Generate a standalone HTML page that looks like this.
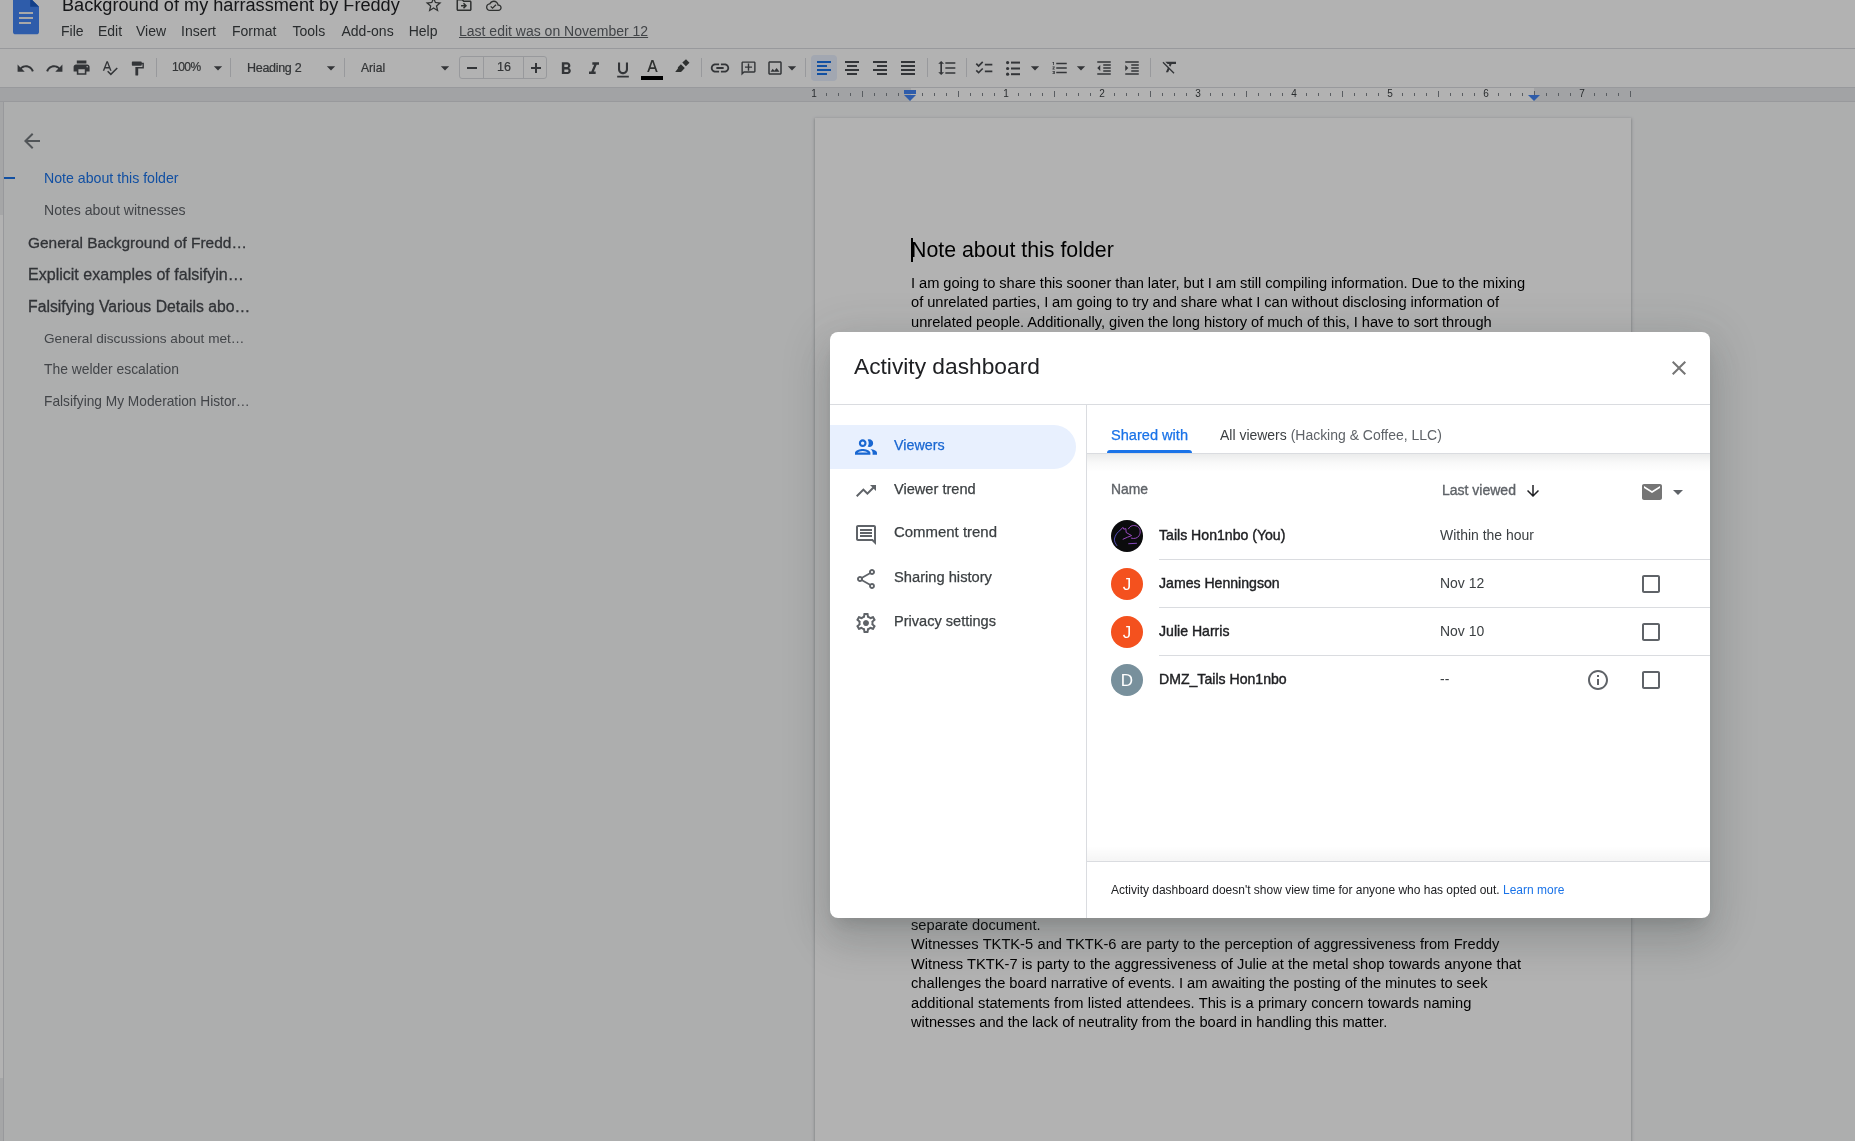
<!DOCTYPE html>
<html><head><meta charset="utf-8"><title>Activity dashboard</title>
<style>
html,body{margin:0;padding:0;width:1855px;height:1141px;overflow:hidden;background:#f8f9fa;font-family:"Liberation Sans",sans-serif;}
.t{position:absolute;white-space:nowrap;}
.i{position:absolute;display:block;}
.r{position:absolute;}
#under{will-change:transform;position:absolute;left:0;top:0;width:1855px;height:1141px;overflow:hidden;}
#scrim{position:absolute;left:0;top:0;width:1855px;height:1141px;background:rgba(0,0,0,0.3);}
#modal{will-change:transform;position:absolute;left:830px;top:332px;width:880px;height:586px;background:#fff;border-radius:8px;overflow:hidden;
 box-shadow:0 24px 38px 3px rgba(60,64,67,.15),0 9px 46px 8px rgba(60,64,67,.12),0 11px 15px -7px rgba(60,64,67,.2);}
</style></head><body>
<div id="under">

<div class="r" style="left:0px;top:0px;width:1855px;height:48px;background:#ffffff;"></div>
<div class="r" style="left:0px;top:48px;width:1855px;height:1px;background:#dadce0;"></div>
<div class="r" style="left:0px;top:49px;width:1855px;height:38px;background:#ffffff;"></div>
<div class="r" style="left:0px;top:87px;width:1855px;height:1px;background:#dadce0;"></div>
<svg class="i" style="left:13px;top:-2px" width="26" height="37" viewBox="0 0 26 37"><path fill="#4285f4" d="M0 2.5C0 1.1 1.1 0 2.5 0H17.2L26 8.8V34C26 35.4 24.9 36.3 23.5 36.3H2.5C1.1 36.3 0 35.4 0 34z"/><path fill="#1a5bc4" d="M17.2 0L26 8.8H17.2z"/><rect fill="#f1f1f1" x="6" y="14" width="14" height="2"/><rect fill="#f1f1f1" x="6" y="19" width="14" height="2"/><rect fill="#f1f1f1" x="6" y="24" width="12" height="2"/></svg>
<div class="t" style="left:62px;top:-4.36px;font-size:18.15px;line-height:18.15px;color:#202124;font-weight:400;">Background of my harrassment by Freddy</div>
<svg class="i" style="left:424.4px;top:-4.9px;" width="19.2" height="19.2" viewBox="0 0 24 24"><path fill="#444746" d="M22 9.24l-7.19-.62L12 2 9.19 8.63 2 9.24l5.46 4.73L5.82 21 12 17.27 18.18 21l-1.63-7.03L22 9.24zM12 15.4l-3.76 2.27 1-4.28-3.32-2.88 4.38-.38L12 6.1l1.71 4.04 4.38.38-3.32 2.88 1 4.28L12 15.4z"/></svg>
<svg class="i" style="left:454.7px;top:-4.3px;" width="18.1" height="18.1" viewBox="0 0 24 24"><path fill="#444746" d="M20 6h-8l-2-2H4c-1.1 0-1.99.9-1.99 2L2 18c0 1.1.9 2 2 2h16c1.1 0 2-.9 2-2V8c0-1.1-.9-2-2-2zm0 12H4V6h5.17l2 2H20v10zm-7.84-6H8v2h4.16l-1.59 1.59L11.99 17 16 13.01 11.99 9l-1.41 1.41L12.16 12z"/></svg>
<svg class="i" style="left:486.2px;top:-2.3px;" width="15.7" height="15.7" viewBox="0 0 24 24"><path fill="#444746" d="M19.35 10.04C18.67 6.59 15.64 4 12 4 9.11 4 6.6 5.64 5.35 8.04 2.34 8.36 0 10.91 0 14c0 3.31 2.69 6 6 6h13c2.76 0 5-2.24 5-5 0-2.64-2.05-4.78-4.65-4.96zM19 18H6c-2.21 0-4-1.79-4-4 0-2.05 1.53-3.76 3.56-3.97l1.07-.11.5-.95C8.080 7.14 9.94 6 12 6c2.62 0 4.88 1.86 5.39 4.43l.3 1.5 1.53.11c1.56.1 2.78 1.41 2.78 2.96 0 1.65-1.35 3-3 3zm-9-3.82l-2.09-2.09L6.5 13.5 10 17l6.01-6.01-1.41-1.41z"/></svg>
<div class="t" style="left:61px;top:24.15px;font-size:14px;line-height:14px;color:#3c4043;font-weight:400;">File</div>
<div class="t" style="left:98px;top:24.15px;font-size:14px;line-height:14px;color:#3c4043;font-weight:400;">Edit</div>
<div class="t" style="left:136px;top:24.15px;font-size:14px;line-height:14px;color:#3c4043;font-weight:400;">View</div>
<div class="t" style="left:181px;top:24.15px;font-size:14px;line-height:14px;color:#3c4043;font-weight:400;">Insert</div>
<div class="t" style="left:232px;top:24.15px;font-size:14px;line-height:14px;color:#3c4043;font-weight:400;">Format</div>
<div class="t" style="left:292.5px;top:24.15px;font-size:14px;line-height:14px;color:#3c4043;font-weight:400;">Tools</div>
<div class="t" style="left:341.5px;top:24.15px;font-size:14px;line-height:14px;color:#3c4043;font-weight:400;">Add-ons</div>
<div class="t" style="left:408.7px;top:24.15px;font-size:14px;line-height:14px;color:#3c4043;font-weight:400;">Help</div>
<div class="t" style="left:459px;top:24.15px;font-size:14px;line-height:14px;color:#5f6368;font-weight:400;text-decoration:underline;">Last edit was on November 12</div>
<svg class="i" style="left:16.4px;top:58.5px;" width="19" height="19" viewBox="0 0 24 24"><path fill="#4a4d51" d="M12.5 8c-2.65 0-5.05.99-6.9 2.6L2 7v9h9l-3.62-3.62c1.39-1.16 3.16-1.88 5.12-1.88 3.54 0 6.55 2.31 7.6 5.5l2.37-.78C21.08 11.03 17.15 8 12.5 8z"/></svg>
<svg class="i" style="left:44.8px;top:58.5px;" width="19" height="19" viewBox="0 0 24 24"><path fill="#4a4d51" d="M18.4 10.6C16.55 8.99 14.15 8 11.5 8c-4.65 0-8.58 3.03-9.960 7.22L3.9 16c1.05-3.19 4.05-5.5 7.6-5.5 1.95 0 3.73.72 5.12 1.88L13 16h9V7l-3.6 3.6z"/></svg>
<svg class="i" style="left:72.4px;top:57.6px;" width="19.2" height="19.2" viewBox="0 0 24 24"><path fill="#4a4d51" d="M19 8H5c-1.66 0-3 1.34-3 3v6h4v4h12v-4h4v-6c0-1.66-1.34-3-3-3zm-3 11H8v-5h8v5zm3-7c-.55 0-1-.45-1-1s.45-1 1-1 1 .45 1 1-.45 1-1 1zm-1-9H6v4h12V3z"/></svg>
<svg class="i" style="left:101.2px;top:58.8px;" width="17.5" height="17.5" viewBox="0 0 24 24"><path fill="#4a4d51" d="M12.45 16h2.09L9.43 3H7.57L2.46 16h2.09l1.12-3h5.64l1.14 3zm-6.02-5L8.5 5.48 10.57 11H6.43zm15.16.59l-8.09 8.09L9.83 16l-1.41 1.41 5.09 5.09L23 13l-1.41-1.41z"/></svg>
<svg class="i" style="left:129.2px;top:59.6px;" width="17" height="17" viewBox="0 0 24 24"><path fill="#4a4d51" d="M18 4V3c0-.55-.45-1-1-1H5c-.55 0-1 .45-1 1v4c0 .55.45 1 1 1h12c.55 0 1-.45 1-1V6h1v4H9v11c0 .55.45 1 1 1h2c.55 0 1-.45 1-1v-9h8V4h-3z"/></svg>
<div class="r" style="left:156px;top:58px;width:1px;height:19px;background:#dadce0;"></div>
<div class="r" style="left:230px;top:58px;width:1px;height:19px;background:#dadce0;"></div>
<div class="r" style="left:344px;top:58px;width:1px;height:19px;background:#dadce0;"></div>
<div class="r" style="left:701px;top:58px;width:1px;height:19px;background:#dadce0;"></div>
<div class="r" style="left:805px;top:58px;width:1px;height:19px;background:#dadce0;"></div>
<div class="r" style="left:927px;top:58px;width:1px;height:19px;background:#dadce0;"></div>
<div class="r" style="left:966px;top:58px;width:1px;height:19px;background:#dadce0;"></div>
<div class="r" style="left:1150px;top:58px;width:1px;height:19px;background:#dadce0;"></div>
<div class="t" style="left:172px;top:61.24px;font-size:12px;line-height:12px;color:#4a4d51;font-weight:400;letter-spacing:-0.5px;-webkit-text-stroke:0.2px #444746;">100%</div>
<svg class="i" style="left:208.2px;top:57.9px;" width="20" height="20" viewBox="0 0 24 24"><path fill="#4a4d51" d="M7 10l5 5 5-5z"/></svg>
<div class="t" style="left:247px;top:61.92px;font-size:12.5px;line-height:12.5px;color:#4a4d51;font-weight:400;letter-spacing:-0.3px;-webkit-text-stroke:0.2px #444746;">Heading 2</div>
<svg class="i" style="left:321.2px;top:57.9px;" width="20" height="20" viewBox="0 0 24 24"><path fill="#4a4d51" d="M7 10l5 5 5-5z"/></svg>
<div class="t" style="left:361px;top:61.76px;font-size:12.1px;line-height:12.1px;color:#4a4d51;font-weight:400;-webkit-text-stroke:0.2px #444746;">Arial</div>
<svg class="i" style="left:435.2px;top:58.4px;" width="20" height="20" viewBox="0 0 24 24"><path fill="#4a4d51" d="M7 10l5 5 5-5z"/></svg>
<div class="r" style="left:459px;top:56px;width:86px;height:21px;border:1px solid #dadce0;border-radius:3px;"></div>
<div class="r" style="left:483px;top:56px;width:1px;height:23px;background:#dadce0;"></div>
<div class="r" style="left:523px;top:56px;width:1px;height:23px;background:#dadce0;"></div>
<div class="r" style="left:467px;top:67px;width:10px;height:2px;background:#4a4d51;"></div>
<div class="t" style="left:504px;top:61.42px;font-size:12.5px;line-height:12.5px;color:#4a4d51;font-weight:400;transform:translateX(-50%);-webkit-text-stroke:0.2px #444746;">16</div>
<div class="r" style="left:531px;top:67px;width:10px;height:2px;background:#4a4d51;"></div>
<div class="r" style="left:535px;top:63px;width:2px;height:10px;background:#4a4d51;"></div>
<svg class="i" style="left:555.8px;top:59px;" width="20" height="20" viewBox="0 0 24 24"><path fill="#4a4d51" d="M15.6 10.79c.97-.67 1.65-1.77 1.65-2.79 0-2.26-1.75-4-4-4H7v14h7.04c2.090 0 3.71-1.7 3.71-3.79 0-1.52-.86-2.82-2.15-3.42zM10 6.5h3c.83 0 1.5.67 1.5 1.5s-.67 1.5-1.5 1.5h-3v-3zm3.5 9H10v-3h3.5c.83 0 1.5.67 1.5 1.5s-.67 1.5-1.5 1.5z"/></svg>
<svg class="i" style="left:584px;top:58.7px;" width="20" height="20" viewBox="0 0 24 24"><path fill="#4a4d51" d="M10 4v3h2.21l-3.42 8H6v3h8v-3h-2.21l3.42-8H18V4z"/></svg>
<svg class="i" style="left:612.8px;top:59.5px;" width="20" height="20" viewBox="0 0 24 24"><path fill="#4a4d51" d="M12 17c3.31 0 6-2.69 6-6V3h-2.5v8c0 1.93-1.57 3.5-3.5 3.5S8.5 12.93 8.5 11V3H6v8c0 3.31 2.69 6 6 6zm-7 2v2h14v-2H5z"/></svg>
<svg class="i" style="left:646.5px;top:60px" width="11" height="12" viewBox="0 0 11 12"><path fill="#444746" fill-rule="evenodd" d="M4.4 0H6.4L10.7 12H8.9L7.8 8.9H3.1L2 12H0.2zM3.65 7.3H7.25L5.45 2.1z"/></svg>
<div class="r" style="left:641px;top:76px;width:22px;height:4px;background:#000000;"></div>
<svg class="i" style="left:674px;top:58px" width="18" height="16" viewBox="0 0 18 16"><path fill="#444746" d="M12 1.2L15.5 4.7L11.9 8.2L8.3 4.5zM6.9 6.3L10.8 10L7.6 13.5L6.6 14.1H1.2L3.9 10.6V9.3z"/></svg>
<svg class="i" style="left:709.2px;top:57px;" width="22" height="22" viewBox="0 0 24 24"><path fill="#4a4d51" d="M3.9 12c0-1.71 1.39-3.1 3.1-3.1h4V7H7c-2.76 0-5 2.24-5 5s2.24 5 5 5h4v-1.9H7c-1.71 0-3.1-1.39-3.1-3.1zM8 13h8v-2H8v2zm9-6h-4v1.9h4c1.71 0 3.1 1.39 3.1 3.1s-1.39 3.1-3.1 3.1h-4V17h4c2.76 0 5-2.24 5-5s-2.24-5-5-5z"/></svg>
<svg class="i" style="left:739.6px;top:59.6px;" width="17" height="17" viewBox="0 0 24 24"><path fill="#4a4d51" d="M20 2H4c-1.1 0-2 .9-2 2v18l4-4h14c1.1 0 2-.9 2-2V4c0-1.1-.9-2-2-2zm0 14H5.17L4 17.17V4h16v12zM11 5h2v4h4v2h-4v4h-2v-4H7V9h4z"/></svg>
<svg class="i" style="left:765.75px;top:58.75px;" width="18" height="18" viewBox="0 0 24 24"><path fill="#4a4d51" d="M19 3H5c-1.1 0-2 .9-2 2v14c0 1.1.9 2 2 2h14c1.1 0 2-.9 2-2V5c0-1.1-.9-2-2-2zm0 16H5V5h14v14zm-4.86-7.14l-3 3.86L9 13.14 6 17h12l-3.86-5.14z"/></svg>
<svg class="i" style="left:782.2px;top:58.4px;" width="20" height="20" viewBox="0 0 24 24"><path fill="#4a4d51" d="M7 10l5 5 5-5z"/></svg>
<div class="r" style="left:811px;top:55px;width:26px;height:26px;background:#e8f0fe;border-radius:4px;"></div>
<div class="r" style="left:817px;top:61px;width:14px;height:2px;background:#1a73e8;"></div>
<div class="r" style="left:817px;top:65px;width:10px;height:2px;background:#1a73e8;"></div>
<div class="r" style="left:817px;top:69px;width:14px;height:2px;background:#1a73e8;"></div>
<div class="r" style="left:817px;top:73px;width:10px;height:2px;background:#1a73e8;"></div>
<div class="r" style="left:845px;top:61px;width:14px;height:2px;background:#4a4d51;"></div>
<div class="r" style="left:847px;top:65px;width:10px;height:2px;background:#4a4d51;"></div>
<div class="r" style="left:845px;top:69px;width:14px;height:2px;background:#4a4d51;"></div>
<div class="r" style="left:847px;top:73px;width:10px;height:2px;background:#4a4d51;"></div>
<div class="r" style="left:873px;top:61px;width:14px;height:2px;background:#4a4d51;"></div>
<div class="r" style="left:877px;top:65px;width:10px;height:2px;background:#4a4d51;"></div>
<div class="r" style="left:873px;top:69px;width:14px;height:2px;background:#4a4d51;"></div>
<div class="r" style="left:877px;top:73px;width:10px;height:2px;background:#4a4d51;"></div>
<div class="r" style="left:901px;top:61px;width:14px;height:2px;background:#4a4d51;"></div>
<div class="r" style="left:901px;top:65px;width:14px;height:2px;background:#4a4d51;"></div>
<div class="r" style="left:901px;top:69px;width:14px;height:2px;background:#4a4d51;"></div>
<div class="r" style="left:901px;top:73px;width:14px;height:2px;background:#4a4d51;"></div>
<svg class="i" style="left:936.75px;top:58px;" width="20" height="20" viewBox="0 0 24 24"><path fill="#4a4d51" d="M6 7h2.5L5 3.5 1.5 7H4v10H1.5L5 20.5 8.5 17H6V7zm4-2v2h12V5H10zm0 14h12v-2H10v2zm0-6h12v-2H10v2z"/></svg>
<svg class="i" style="left:974.3px;top:58px;" width="20" height="20" viewBox="0 0 24 24"><path fill="#4a4d51" d="M22 7h-9v2h9V7zm0 8h-9v2h9v-2zM5.54 11L2 7.46l1.41-1.41 2.12 2.12 4.24-4.24 1.41 1.41L5.54 11zm0 8L2 15.46l1.41-1.41 2.12 2.12 4.24-4.24 1.41 1.41L5.54 19z"/></svg>
<svg class="i" style="left:1006px;top:60.5px" width="14" height="15" viewBox="0 0 14 15"><g fill="#4a4d51"><circle cx="1.6" cy="1.6" r="1.6"/><circle cx="1.6" cy="7.5" r="1.6"/><circle cx="1.6" cy="13.2" r="1.6"/><rect x="5" y="0.6" width="9" height="2"/><rect x="5" y="6.5" width="9" height="2"/><rect x="5" y="12.2" width="9" height="2"/></g></svg>
<svg class="i" style="left:1025.2px;top:58.4px;" width="20" height="20" viewBox="0 0 24 24"><path fill="#4a4d51" d="M7 10l5 5 5-5z"/></svg>
<svg class="i" style="left:1050.5px;top:59px;" width="18" height="18" viewBox="0 0 24 24"><path fill="#4a4d51" d="M2 17h2v.5H3v1h1v.5H2v1h3v-4H2v1zm1-9h1V4H2v1h1v3zm-1 3h1.8L2 13.1v.9h3v-1H3.2L5 10.9V10H2v1zm5-6v2h14V5H7zm0 14h14v-2H7v2zm0-6h14v-2H7v2z"/></svg>
<svg class="i" style="left:1071.2px;top:58.4px;" width="20" height="20" viewBox="0 0 24 24"><path fill="#4a4d51" d="M7 10l5 5 5-5z"/></svg>
<svg class="i" style="left:1094.75px;top:59px;" width="18" height="18" viewBox="0 0 24 24"><path fill="#4a4d51" d="M11 17h10v-2H11v2zm-8-5l4 4V8l-4 4zm0 9h18v-2H3v2zM3 3v2h18V3H3zm8 6h10V7H11v2zm0 4h10v-2H11v2z"/></svg>
<svg class="i" style="left:1122.75px;top:59px;" width="18" height="18" viewBox="0 0 24 24"><path fill="#4a4d51" d="M3 21h18v-2H3v2zM3 8v8l4-4-4-4zm8 9h10v-2H11v2zM3 3v2h18V3H3zm8 6h10V7H11v2zm0 4h10v-2H11v2z"/></svg>
<svg class="i" style="left:1160.5px;top:58.25px;" width="18" height="18" viewBox="0 0 24 24"><path fill="#4a4d51" d="M3.27 5L2 6.27l6.97 6.97L6.5 19h3l1.57-3.66L16.73 21 18 19.73 3.550 5.27 3.27 5zM6 5v.18L8.82 8h2.4l-.72 1.68 2.1 2.1L14.21 8H20V5H6z"/></svg>
<div class="r" style="left:0px;top:88px;width:1855px;height:13px;background:#e8eaed;"></div>
<div class="r" style="left:911px;top:88px;width:623px;height:13px;background:#ffffff;"></div>
<div class="r" style="left:0px;top:101px;width:1855px;height:1px;background:#dadce0;"></div>
<div class="t" style="left:814px;top:89.03px;font-size:10px;line-height:10px;color:#3c4043;font-weight:400;transform:translateX(-50%);">1</div>
<div class="r" style="left:826px;top:93px;width:1px;height:3px;background:#80868b;"></div>
<div class="r" style="left:838px;top:93px;width:1px;height:3px;background:#80868b;"></div>
<div class="r" style="left:850px;top:93px;width:1px;height:3px;background:#80868b;"></div>
<div class="r" style="left:862px;top:91px;width:1px;height:6px;background:#80868b;"></div>
<div class="r" style="left:874px;top:93px;width:1px;height:3px;background:#80868b;"></div>
<div class="r" style="left:886px;top:93px;width:1px;height:3px;background:#80868b;"></div>
<div class="r" style="left:898px;top:93px;width:1px;height:3px;background:#80868b;"></div>
<div class="r" style="left:922px;top:93px;width:1px;height:3px;background:#80868b;"></div>
<div class="r" style="left:934px;top:93px;width:1px;height:3px;background:#80868b;"></div>
<div class="r" style="left:946px;top:93px;width:1px;height:3px;background:#80868b;"></div>
<div class="r" style="left:958px;top:91px;width:1px;height:6px;background:#80868b;"></div>
<div class="r" style="left:970px;top:93px;width:1px;height:3px;background:#80868b;"></div>
<div class="r" style="left:982px;top:93px;width:1px;height:3px;background:#80868b;"></div>
<div class="r" style="left:994px;top:93px;width:1px;height:3px;background:#80868b;"></div>
<div class="t" style="left:1006px;top:89.03px;font-size:10px;line-height:10px;color:#3c4043;font-weight:400;transform:translateX(-50%);">1</div>
<div class="r" style="left:1018px;top:93px;width:1px;height:3px;background:#80868b;"></div>
<div class="r" style="left:1030px;top:93px;width:1px;height:3px;background:#80868b;"></div>
<div class="r" style="left:1042px;top:93px;width:1px;height:3px;background:#80868b;"></div>
<div class="r" style="left:1054px;top:91px;width:1px;height:6px;background:#80868b;"></div>
<div class="r" style="left:1066px;top:93px;width:1px;height:3px;background:#80868b;"></div>
<div class="r" style="left:1078px;top:93px;width:1px;height:3px;background:#80868b;"></div>
<div class="r" style="left:1090px;top:93px;width:1px;height:3px;background:#80868b;"></div>
<div class="t" style="left:1102px;top:89.03px;font-size:10px;line-height:10px;color:#3c4043;font-weight:400;transform:translateX(-50%);">2</div>
<div class="r" style="left:1114px;top:93px;width:1px;height:3px;background:#80868b;"></div>
<div class="r" style="left:1126px;top:93px;width:1px;height:3px;background:#80868b;"></div>
<div class="r" style="left:1138px;top:93px;width:1px;height:3px;background:#80868b;"></div>
<div class="r" style="left:1150px;top:91px;width:1px;height:6px;background:#80868b;"></div>
<div class="r" style="left:1162px;top:93px;width:1px;height:3px;background:#80868b;"></div>
<div class="r" style="left:1174px;top:93px;width:1px;height:3px;background:#80868b;"></div>
<div class="r" style="left:1186px;top:93px;width:1px;height:3px;background:#80868b;"></div>
<div class="t" style="left:1198px;top:89.03px;font-size:10px;line-height:10px;color:#3c4043;font-weight:400;transform:translateX(-50%);">3</div>
<div class="r" style="left:1210px;top:93px;width:1px;height:3px;background:#80868b;"></div>
<div class="r" style="left:1222px;top:93px;width:1px;height:3px;background:#80868b;"></div>
<div class="r" style="left:1234px;top:93px;width:1px;height:3px;background:#80868b;"></div>
<div class="r" style="left:1246px;top:91px;width:1px;height:6px;background:#80868b;"></div>
<div class="r" style="left:1258px;top:93px;width:1px;height:3px;background:#80868b;"></div>
<div class="r" style="left:1270px;top:93px;width:1px;height:3px;background:#80868b;"></div>
<div class="r" style="left:1282px;top:93px;width:1px;height:3px;background:#80868b;"></div>
<div class="t" style="left:1294px;top:89.03px;font-size:10px;line-height:10px;color:#3c4043;font-weight:400;transform:translateX(-50%);">4</div>
<div class="r" style="left:1306px;top:93px;width:1px;height:3px;background:#80868b;"></div>
<div class="r" style="left:1318px;top:93px;width:1px;height:3px;background:#80868b;"></div>
<div class="r" style="left:1330px;top:93px;width:1px;height:3px;background:#80868b;"></div>
<div class="r" style="left:1342px;top:91px;width:1px;height:6px;background:#80868b;"></div>
<div class="r" style="left:1354px;top:93px;width:1px;height:3px;background:#80868b;"></div>
<div class="r" style="left:1366px;top:93px;width:1px;height:3px;background:#80868b;"></div>
<div class="r" style="left:1378px;top:93px;width:1px;height:3px;background:#80868b;"></div>
<div class="t" style="left:1390px;top:89.03px;font-size:10px;line-height:10px;color:#3c4043;font-weight:400;transform:translateX(-50%);">5</div>
<div class="r" style="left:1402px;top:93px;width:1px;height:3px;background:#80868b;"></div>
<div class="r" style="left:1414px;top:93px;width:1px;height:3px;background:#80868b;"></div>
<div class="r" style="left:1426px;top:93px;width:1px;height:3px;background:#80868b;"></div>
<div class="r" style="left:1438px;top:91px;width:1px;height:6px;background:#80868b;"></div>
<div class="r" style="left:1450px;top:93px;width:1px;height:3px;background:#80868b;"></div>
<div class="r" style="left:1462px;top:93px;width:1px;height:3px;background:#80868b;"></div>
<div class="r" style="left:1474px;top:93px;width:1px;height:3px;background:#80868b;"></div>
<div class="t" style="left:1486px;top:89.03px;font-size:10px;line-height:10px;color:#3c4043;font-weight:400;transform:translateX(-50%);">6</div>
<div class="r" style="left:1498px;top:93px;width:1px;height:3px;background:#80868b;"></div>
<div class="r" style="left:1510px;top:93px;width:1px;height:3px;background:#80868b;"></div>
<div class="r" style="left:1522px;top:93px;width:1px;height:3px;background:#80868b;"></div>
<div class="r" style="left:1534px;top:91px;width:1px;height:6px;background:#80868b;"></div>
<div class="r" style="left:1546px;top:93px;width:1px;height:3px;background:#80868b;"></div>
<div class="r" style="left:1558px;top:93px;width:1px;height:3px;background:#80868b;"></div>
<div class="r" style="left:1570px;top:93px;width:1px;height:3px;background:#80868b;"></div>
<div class="t" style="left:1582px;top:89.03px;font-size:10px;line-height:10px;color:#3c4043;font-weight:400;transform:translateX(-50%);">7</div>
<div class="r" style="left:1594px;top:93px;width:1px;height:3px;background:#80868b;"></div>
<div class="r" style="left:1606px;top:93px;width:1px;height:3px;background:#80868b;"></div>
<div class="r" style="left:1618px;top:93px;width:1px;height:3px;background:#80868b;"></div>
<div class="r" style="left:1630px;top:91px;width:1px;height:6px;background:#80868b;"></div>
<div class="r" style="left:904px;top:90px;width:12px;height:4px;background:#4285f4;"></div>
<svg class="i" style="left:904px;top:95px" width="12" height="6" viewBox="0 0 12 6"><path fill="#4285f4" d="M0 0H12L6 6z"/></svg>
<svg class="i" style="left:1528px;top:95px" width="12" height="6" viewBox="0 0 12 6"><path fill="#4285f4" d="M0 0H12L6 6z"/></svg>
<div class="r" style="left:0px;top:102px;width:3px;height:113px;background:#eceef0;"></div>
<div class="r" style="left:0px;top:215px;width:3px;height:863px;background:#ffffff;"></div>
<div class="r" style="left:0px;top:1078px;width:3px;height:63px;background:#eceef0;"></div>
<div class="r" style="left:3px;top:102px;width:1px;height:1039px;background:#dadce0;"></div>
<svg class="i" style="left:20px;top:129px;" width="24" height="24" viewBox="0 0 24 24"><path fill="#757a7f" d="M20 11H7.83l5.59-5.59L12 4l-8 8 8 8 1.41-1.41L7.83 13H20v-2z"/></svg>
<div class="r" style="left:4px;top:177px;width:11px;height:2px;background:#1a73e8;"></div>
<div class="t" style="left:44px;top:171.01px;font-size:14.17px;line-height:14.17px;color:#1a73e8;font-weight:400;">Note about this folder</div>
<div class="t" style="left:44px;top:203.08px;font-size:14.08px;line-height:14.08px;color:#5f6368;font-weight:400;">Notes about witnesses</div>
<div class="t" style="left:28px;top:234.92px;font-size:15.45px;line-height:15.45px;color:#474a4f;font-weight:400;-webkit-text-stroke:0.3px #474a4f;">General Background of Fredd…</div>
<div class="t" style="left:28px;top:266.41px;font-size:16.06px;line-height:16.06px;color:#474a4f;font-weight:400;-webkit-text-stroke:0.3px #474a4f;">Explicit examples of falsifyin…</div>
<div class="t" style="left:28px;top:298.64px;font-size:15.78px;line-height:15.78px;color:#474a4f;font-weight:400;-webkit-text-stroke:0.3px #474a4f;">Falsifying Various Details abo…</div>
<div class="t" style="left:44px;top:331.97px;font-size:13.62px;line-height:13.62px;color:#5f6368;font-weight:400;">General discussions about met…</div>
<div class="t" style="left:44px;top:363.25px;font-size:13.88px;line-height:13.88px;color:#5f6368;font-weight:400;">The welder escalation</div>
<div class="t" style="left:44px;top:395.38px;font-size:13.73px;line-height:13.73px;color:#5f6368;font-weight:400;">Falsifying My Moderation Histor…</div>
<div class="r" style="left:815px;top:118px;width:816px;height:1100px;background:#fff;box-shadow:0 1px 2px 0 rgba(60,64,67,.3),0 1px 3px 1px rgba(60,64,67,.15);"></div>
<div class="r" style="left:911px;top:238px;width:2px;height:24px;background:#000;"></div>
<div class="t" style="left:911px;top:240.44px;font-size:21.33px;line-height:21.33px;color:#000;font-weight:400;">Note about this folder</div>
<div class="t" style="left:911px;top:275.58px;font-size:14.67px;line-height:14.67px;color:#000;font-weight:400;word-spacing:-0.14px;">I am going to share this sooner than later, but I am still compiling information. Due to the mixing</div>
<div class="t" style="left:911px;top:295.08px;font-size:14.67px;line-height:14.67px;color:#000;font-weight:400;word-spacing:-0.16px;">of unrelated parties, I am going to try and share what I can without disclosing information of</div>
<div class="t" style="left:911px;top:314.58px;font-size:14.67px;line-height:14.67px;color:#000;font-weight:400;word-spacing:-0.16px;">unrelated people. Additionally, given the long history of much of this, I have to sort through</div>
<div class="t" style="left:911px;top:334.08px;font-size:14.67px;line-height:14.67px;color:#000;font-weight:400;word-spacing:0px;">a lot of material before I can share everything in a reasonable and organized manner.</div>
<div class="t" style="left:911px;top:917.78px;font-size:14.67px;line-height:14.67px;color:#000;font-weight:400;word-spacing:0px;">separate document.</div>
<div class="t" style="left:911px;top:937.08px;font-size:14.67px;line-height:14.67px;color:#000;font-weight:400;word-spacing:0.26px;">Witnesses TKTK-5 and TKTK-6 are party to the perception of aggressiveness from Freddy</div>
<div class="t" style="left:911px;top:956.88px;font-size:14.67px;line-height:14.67px;color:#000;font-weight:400;word-spacing:0.17px;">Witness TKTK-7 is party to the aggressiveness of Julie at the metal shop towards anyone that</div>
<div class="t" style="left:911px;top:976.08px;font-size:14.67px;line-height:14.67px;color:#000;font-weight:400;word-spacing:-0.13px;">challenges the board narrative of events. I am awaiting the posting of the minutes to seek</div>
<div class="t" style="left:911px;top:995.78px;font-size:14.67px;line-height:14.67px;color:#000;font-weight:400;word-spacing:0.24px;">additional statements from listed attendees. This is a primary concern towards naming</div>
<div class="t" style="left:911px;top:1014.98px;font-size:14.67px;line-height:14.67px;color:#000;font-weight:400;word-spacing:-0.1px;">witnesses and the lack of neutrality from the board in handling this matter.</div>
</div>
<div id="scrim"></div>
<div id="modal">
<div class="t" style="left:24px;top:22.73px;font-size:22.76px;line-height:22.76px;color:#202124;font-weight:400;">Activity dashboard</div>
<svg class="i" style="left:837px;top:24px;" width="24" height="24" viewBox="0 0 24 24"><path fill="#757575" d="M19 6.41L17.59 5 12 10.59 6.41 5 5 6.41 10.59 12 5 17.59 6.41 19 12 13.41 17.59 19 19 17.59 13.41 12z"/></svg>
<div class="r" style="left:0px;top:72px;width:880px;height:1px;background:#dadce0;"></div>
<div class="r" style="left:256px;top:73px;width:1px;height:513px;background:#dadce0;"></div>
<div class="r" style="left:0px;top:93px;width:246px;height:44px;background:#e8f0fe;border-radius:0 22px 22px 0;"></div>
<svg class="i" style="left:24px;top:103px;transform:scale(1.1);" width="24" height="24" viewBox="0 0 24 24"><path fill="#1967d2" d="M9 13.75c-2.34 0-7 1.17-7 3.5V19h14v-1.75c0-2.33-4.66-3.5-7-3.5zM4.34 17c.84-.58 2.87-1.25 4.66-1.25s3.82.67 4.66 1.25H4.34zM9 12c1.93 0 3.5-1.57 3.5-3.5S10.93 5 9 5 5.5 6.57 5.5 8.5 7.07 12 9 12zm0-5c.83 0 1.5.67 1.5 1.5S9.83 10 9 10s-1.5-.67-1.5-1.5S8.17 7 9 7zm7.04 6.81c1.16.84 1.96 1.96 1.96 3.44V19h4v-1.75c0-2.02-3.5-3.17-5.96-3.44zM15 12c1.93 0 3.5-1.57 3.5-3.5S16.93 5 15 5c-.54 0-1.04.13-1.5.35.63.89 1 1.98 1 3.15s-.37 2.26-1 3.15c.46.22.96.35 1.5.35z"/></svg>
<svg class="i" style="left:24px;top:147px;" width="24" height="24" viewBox="0 0 24 24"><path fill="#5f6368" d="M16 6l2.29 2.29-4.88 4.88-4-4L2 16.59 3.41 18l6-6 4 4 6.3-6.29L22 12V6z"/></svg>
<svg class="i" style="left:24px;top:191px;" width="24" height="24" viewBox="0 0 24 24"><path fill="#5f6368" d="M21.99 4c0-1.1-.89-2-1.99-2H4c-1.1 0-2 .9-2 2v12c0 1.1.9 2 2 2h14l4 4-.01-18zM20 4v13.17L18.83 16H4V4h16zM6 12h12v2H6zm0-3h12v2H6zm0-3h12v2H6z"/></svg>
<svg class="i" style="left:24px;top:235px;" width="24" height="24" viewBox="0 0 24 24"><path fill="#5f6368" d="M18 16.08c-.76 0-1.44.3-1.96.77L8.91 12.7c.05-.23.09-.46.09-.7s-.04-.47-.09-.7l7.05-4.11c.54.5 1.25.81 2.04.81 1.66 0 3-1.34 3-3s-1.34-3-3-3-3 1.34-3 3c0 .24.04.47.09.7L8.04 9.81C7.5 9.31 6.79 9 6 9c-1.66 0-3 1.34-3 3s1.34 3 3 3c.79 0 1.5-.31 2.04-.81l7.12 4.16c-.05.21-.08.43-.08.65 0 1.61 1.31 2.92 2.92 2.92s2.92-1.31 2.92-2.92-1.31-2.92-2.92-2.92zM18 4c.55 0 1 .45 1 1s-.45 1-1 1-1-.45-1-1 .45-1 1-1zM6 13c-.55 0-1-.45-1-1s.45-1 1-1 1 .45 1 1-.45 1-1 1zm12 7.02c-.55 0-1-.45-1-1s.45-1 1-1 1 .45 1 1-.45 1-1 1z"/></svg>
<svg class="i" style="left:24px;top:279px;" width="24" height="24" viewBox="0 0 24 24"><path fill="#5f6368" d="M19.43 12.98c.04-.32.07-.64.07-.98 0-.34-.03-.66-.07-.98l2.11-1.65c.19-.15.24-.42.12-.64l-2-3.46c-.09-.16-.26-.25-.44-.25-.06 0-.12.01-.17.03l-2.49 1c-.52-.4-1.08-.73-1.69-.98l-.38-2.65C14.46 2.18 14.25 2 14 2h-4c-.25 0-.46.18-.49.42l-.38 2.65c-.61.25-1.17.59-1.69.98l-2.49-1c-.06-.02-.12-.03-.18-.03-.17 0-.34.09-.43.25l-2 3.46c-.13.22-.07.49.12.64l2.11 1.65c-.04.32-.07.65-.07.98 0 .33.03.66.07.98l-2.11 1.65c-.19.15-.24.42-.12.64l2 3.46c.09.16.26.25.44.25.06 0 .12-.01.17-.03l2.49-1c.52.4 1.08.73 1.69.98l.38 2.65c.03.24.24.42.49.42h4c.25 0 .46-.18.49-.42l.38-2.65c.61-.25 1.17-.59 1.69-.98l2.49 1c.06.02.12.03.18.03.17 0 .34-.09.43-.25l2-3.46c.12-.22.07-.49-.12-.64l-2.11-1.65zm-1.98-1.71c.04.31.05.52.05.73 0 .21-.02.43-.05.73l-.14 1.13.89.7 1.08.84-.7 1.21-1.27-.51-1.04-.42-.9.68c-.43.32-.84.56-1.25.73l-1.06.43-.16 1.13-.2 1.35h-1.4l-.19-1.35-.16-1.13-1.06-.43c-.43-.18-.83-.41-1.23-.71l-.91-.7-1.06.43-1.27.51-.7-1.21 1.08-.84.89-.7-.14-1.13c-.03-.31-.05-.54-.05-.74s.02-.43.05-.73l.14-1.13-.89-.7-1.08-.84.7-1.21 1.27.51 1.04.42.9-.68c.43-.32.84-.56 1.25-.73l1.06-.43.16-1.13.2-1.35h1.39l.19 1.35.16 1.13 1.06.43c.43.18.83.41 1.23.71l.91.7 1.06-.43 1.27-.51.7 1.21-1.07.85-.89.7.14 1.13zM12 9a3 3 0 1 0 0.001 0z"/></svg>
<div class="t" style="left:64px;top:105.90px;font-size:14.3px;line-height:14.3px;color:#1967d2;font-weight:400;-webkit-text-stroke:0.25px #1967d2;">Viewers</div>
<div class="t" style="left:64px;top:149.64px;font-size:14.6px;line-height:14.6px;color:#3c4043;font-weight:400;-webkit-text-stroke:0.25px #3c4043;">Viewer trend</div>
<div class="t" style="left:64px;top:193.34px;font-size:14.95px;line-height:14.95px;color:#3c4043;font-weight:400;-webkit-text-stroke:0.25px #3c4043;">Comment trend</div>
<div class="t" style="left:64px;top:237.56px;font-size:14.69px;line-height:14.69px;color:#3c4043;font-weight:400;-webkit-text-stroke:0.25px #3c4043;">Sharing history</div>
<div class="t" style="left:64px;top:281.67px;font-size:14.57px;line-height:14.57px;color:#3c4043;font-weight:400;-webkit-text-stroke:0.25px #3c4043;">Privacy settings</div>
<div class="t" style="left:281px;top:95.66px;font-size:14.58px;line-height:14.58px;color:#1a73e8;font-weight:400;-webkit-text-stroke:0.25px #1a73e8;">Shared with</div>
<div class="t" style="left:390px;top:96.17px;font-size:13.98px;line-height:13.98px;color:#3c4043;font-weight:400;">All viewers <span style="color:#5f6368">(Hacking &amp; Coffee, LLC)</span></div>
<div class="r" style="left:277px;top:118px;width:85px;height:3px;background:#1a73e8;border-radius:3px 3px 0 0;"></div>
<div class="r" style="left:257px;top:121px;width:623px;height:1px;background:#dadce0;"></div>
<div class="r" style="left:257px;top:122px;width:623px;height:18px;background:linear-gradient(rgba(60,64,67,.10),rgba(60,64,67,.03) 50%,rgba(60,64,67,0));"></div>
<div class="t" style="left:281px;top:151.26px;font-size:13.87px;line-height:13.87px;color:#5f6368;font-weight:400;-webkit-text-stroke:0.35px #5f6368;">Name</div>
<div class="t" style="left:612px;top:151.14px;font-size:14.01px;line-height:14.01px;color:#5f6368;font-weight:400;-webkit-text-stroke:0.35px #5f6368;">Last viewed</div>
<svg class="i" style="left:694px;top:150px;" width="18" height="18" viewBox="0 0 24 24"><path fill="#202124" d="M20 12l-1.41-1.41L13 16.17V4h-2v12.17l-5.58-5.59L4 12l8 8 8-8z"/></svg>
<svg class="i" style="left:810px;top:148px;" width="24" height="24" viewBox="0 0 24 24"><path fill="#757575" d="M20 4H4c-1.1 0-1.99.9-1.99 2L2 18c0 1.1.9 2 2 2h16c1.1 0 2-.9 2-2V6c0-1.1-.9-2-2-2zm0 4l-8 5-8-5V6l8 5 8-5v2z"/></svg>
<svg class="i" style="left:836px;top:148px;" width="24" height="24" viewBox="0 0 24 24"><path fill="#5f6368" d="M7 10l5 5 5-5z"/></svg>
<svg class="i" style="left:281px;top:188px" width="32" height="32" viewBox="0 0 32 32"><circle cx="16" cy="16" r="16" fill="#0b0b0d"/><g fill="none" stroke-width="0.95" stroke-linecap="round" stroke-linejoin="round"><path d="M17.5 8.8 C19 5.5 23 4.5 26.5 6.5 C29.5 8.5 30 12.5 28 15.8 C26.5 18.2 23.5 19 20.3 18.2" stroke="#9b4cc4"/><path d="M9.2 10.2 L11.9 7.4 L12.8 9.2 L14.8 8.6 L15.2 12.5 L20.6 15.6 L16.5 17.2 L12.1 19.2" stroke="#a04cc8"/><path d="M9.2 10.2 C6.5 12 4.2 15 3.4 19 C3.2 21.5 4.5 23.5 5.8 25.5" stroke="#5650c0"/><path d="M17.7 23.7 L25.5 23.3" stroke="#8a4cc4"/></g></svg>
<div class="t" style="left:329px;top:196.06px;font-size:14.1px;line-height:14.1px;color:#202124;font-weight:400;-webkit-text-stroke:0.4px #202124;">Tails Hon1nbo (You)</div>
<div class="t" style="left:610px;top:196.17px;font-size:13.98px;line-height:13.98px;color:#3c4043;font-weight:400;">Within the hour</div>
<div class="r" style="left:329px;top:227px;width:551px;height:1px;background:#dadce0;"></div>
<div class="r" style="left:281px;top:236px;width:32px;height:32px;border-radius:50%;background:#f4511e;"></div>
<div class="t" style="left:297px;top:243.81px;font-size:17px;line-height:17px;color:#ffffff;font-weight:400;transform:translateX(-50%);">J</div>
<div class="t" style="left:329px;top:244.06px;font-size:14.1px;line-height:14.1px;color:#202124;font-weight:400;-webkit-text-stroke:0.4px #202124;">James Henningson</div>
<div class="t" style="left:610px;top:244.17px;font-size:13.98px;line-height:13.98px;color:#3c4043;font-weight:400;">Nov 12</div>
<svg class="i" style="left:809px;top:240px;" width="24" height="24" viewBox="0 0 24 24"><path fill="#5f6368" d="M19 5v14H5V5h14m0-2H5c-1.1 0-2 .9-2 2v14c0 1.1.9 2 2 2h14c1.1 0 2-.9 2-2V5c0-1.1-.9-2-2-2z"/></svg>
<div class="r" style="left:329px;top:275px;width:551px;height:1px;background:#dadce0;"></div>
<div class="r" style="left:281px;top:284px;width:32px;height:32px;border-radius:50%;background:#f4511e;"></div>
<div class="t" style="left:297px;top:291.81px;font-size:17px;line-height:17px;color:#ffffff;font-weight:400;transform:translateX(-50%);">J</div>
<div class="t" style="left:329px;top:292.06px;font-size:14.1px;line-height:14.1px;color:#202124;font-weight:400;-webkit-text-stroke:0.4px #202124;">Julie Harris</div>
<div class="t" style="left:610px;top:292.17px;font-size:13.98px;line-height:13.98px;color:#3c4043;font-weight:400;">Nov 10</div>
<svg class="i" style="left:809px;top:288px;" width="24" height="24" viewBox="0 0 24 24"><path fill="#5f6368" d="M19 5v14H5V5h14m0-2H5c-1.1 0-2 .9-2 2v14c0 1.1.9 2 2 2h14c1.1 0 2-.9 2-2V5c0-1.1-.9-2-2-2z"/></svg>
<div class="r" style="left:329px;top:323px;width:551px;height:1px;background:#dadce0;"></div>
<div class="r" style="left:281px;top:332px;width:32px;height:32px;border-radius:50%;background:#78909c;"></div>
<div class="t" style="left:297px;top:339.81px;font-size:17px;line-height:17px;color:#ffffff;font-weight:400;transform:translateX(-50%);">D</div>
<div class="t" style="left:329px;top:340.06px;font-size:14.1px;line-height:14.1px;color:#202124;font-weight:400;-webkit-text-stroke:0.4px #202124;">DMZ_Tails Hon1nbo</div>
<div class="t" style="left:610px;top:340.17px;font-size:13.98px;line-height:13.98px;color:#3c4043;font-weight:400;">--</div>
<svg class="i" style="left:809px;top:336px;" width="24" height="24" viewBox="0 0 24 24"><path fill="#5f6368" d="M19 5v14H5V5h14m0-2H5c-1.1 0-2 .9-2 2v14c0 1.1.9 2 2 2h14c1.1 0 2-.9 2-2V5c0-1.1-.9-2-2-2z"/></svg>
<svg class="i" style="left:756px;top:336px;" width="24" height="24" viewBox="0 0 24 24"><path fill="#5f6368" d="M11 7h2v2h-2zm0 4h2v6h-2zm1-9C6.48 2 2 6.48 2 12s4.48 10 10 10 10-4.48 10-10S17.52 2 12 2zm0 18c-4.41 0-8-3.59-8-8s3.59-8 8-8 8 3.59 8 8-3.59 8-8 8z"/></svg>
<div class="r" style="left:257px;top:514px;width:623px;height:15px;background:linear-gradient(rgba(0,0,0,0),rgba(0,0,0,.04));"></div>
<div class="r" style="left:257px;top:529px;width:623px;height:1px;background:#dadce0;"></div>
<div class="t" style="left:281px;top:551.85px;font-size:11.99px;line-height:11.99px;color:#202124;font-weight:400;">Activity dashboard doesn't show view time for anyone who has opted out. <span style="color:#1a73e8">Learn more</span></div>
</div>
</body></html>
